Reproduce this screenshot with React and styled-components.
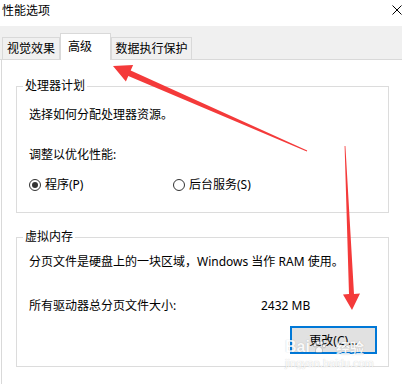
import React from 'react';
import styled, { createGlobalStyle } from 'styled-components';

const GlobalStyle = createGlobalStyle`
  html, body {
    margin: 0;
    padding: 0;
    background: #fff;
  }
  body {
    width: 402px;
    height: 384px;
    overflow: hidden;
    font-family: "Noto Sans", "Noto Sans CJK SC", sans-serif;
    font-size: 12px;
    color: #000;
  }
`;

const Window = styled.div`
  position: relative;
  width: 402px;
  height: 384px;
  background: #fff;
  overflow: hidden;
`;

const TitleBar = styled.div`
  height: 26px;
  display: flex;
  align-items: flex-start;
  justify-content: space-between;
  padding: 3px 0 0 2px;
  box-sizing: border-box;
  line-height: 16px;
`;

const CloseIcon = styled.svg`
  margin-top: 2px;
  width: 10px;
  height: 10px;
`;

const TabStrip = styled.div`
  height: 34px;
  box-sizing: border-box;
  display: flex;
  align-items: flex-end;
  padding-left: 2px;
  background: #f0f0f0;
  border-bottom: 1px solid #d9d9d9;
`;

const Tab = styled.div`
  position: relative;
  box-sizing: border-box;
  display: flex;
  align-items: center;
  width: ${p => p.$w}px;
  height: ${p => (p.$active ? 27 : 22)}px;
  margin-bottom: ${p => (p.$active ? -1 : 0)}px;
  justify-content: ${p => (p.$active ? 'flex-start' : 'center')};
  padding-left: ${p => (p.$active ? 7 : 0)}px;
  padding-bottom: ${p => (p.$active ? 1 : 0)}px;
  background: ${p => (p.$active ? '#fff' : '#f0f0f0')};
  border: 1px solid #d9d9d9;
  border-bottom: none;
  z-index: ${p => (p.$active ? 1 : 0)};
  line-height: 16px;
`;

const Panel = styled.div`
  margin-left: 1px;
  border-left: 1px solid #d9d9d9;
  padding: 18px 13px 0 14px;
  height: 324px;
  box-sizing: border-box;
`;

const Group = styled.fieldset`
  margin: ${p => p.$top || 0}px 0 0 0;
  padding: 0;
  border: 1px solid #dcdcdc;
  min-width: 0;
`;

const Legend = styled.legend`
  margin-left: 6px;
  padding: 0 2px;
  line-height: 16px;
  font-size: 12px;
`;

const GroupBody = styled.div`
  padding: ${p => p.$pad};
`;

const Line = styled.div`
  line-height: 18px;
  margin-top: ${p => p.$gap || 0}px;
  white-space: nowrap;
`;

const RadioRow = styled.div`
  display: grid;
  grid-template-columns: 144px auto;
  margin-top: 12px;
  line-height: 18px;
`;

const Option = styled.label`
  display: flex;
  align-items: center;
  gap: 4px;
`;

const Radio = styled.span`
  position: relative;
  width: 12px;
  height: 12px;
  box-sizing: border-box;
  border: 1px solid #333;
  border-radius: 50%;
  background: #fff;
  &::after {
    content: '';
    display: ${p => (p.$checked ? 'block' : 'none')};
    position: absolute;
    left: 2px;
    top: 2px;
    width: 6px;
    height: 6px;
    border-radius: 50%;
    background: #333;
  }
`;

const SizeRow = styled.div`
  display: flex;
  line-height: 18px;
  margin-top: 26px;
`;

const SizeLabel = styled.span`
  width: 232px;
`;

const ButtonRow = styled.div`
  display: flex;
  justify-content: flex-end;
  margin-top: 11px;
`;

const Button = styled.button`
  width: 87px;
  height: 28px;
  box-sizing: border-box;
  border: 2px solid #0078d7;
  background: #e1e1e1;
  font-family: inherit;
  font-size: 12px;
  color: #000;
  padding: 0;
`;

const Overlay = styled.svg`
  position: absolute;
  left: 0;
  top: 0;
  width: 402px;
  height: 384px;
  pointer-events: none;
`;

const Watermark = styled.div`
  position: absolute;
  left: 285px;
  top: 338px;
  pointer-events: none;
  color: #fff;
  text-shadow: 0 0 1px rgba(0, 0, 0, 0.3);
  opacity: 0.8;
`;

const MarkTop = styled.div`
  display: flex;
  align-items: center;
  gap: 2px;
  font-family: "Liberation Sans", sans-serif;
  font-weight: bold;
  font-size: 16px;
  line-height: 18px;
  span:last-child {
    font-family: "Noto Sans CJK SC", sans-serif;
    font-size: 14px;
    margin-left: 8px;
  }
`;

const MarkUrl = styled.div`
  font-family: "Liberation Sans", sans-serif;
  font-size: 11px;
  line-height: 12px;
  margin-top: 1px;
`;

export default function App() {
  return (
    <Window>
      <GlobalStyle />
      <TitleBar>
        <span>性能选项</span>
        <CloseIcon viewBox="0 0 10 10">
          <path d="M0.5 0.5 L9.5 9.5 M9.5 0.5 L0.5 9.5" stroke="#000" strokeWidth="1" fill="none" />
        </CloseIcon>
      </TitleBar>
      <TabStrip>
        <Tab $w={58}>视觉效果</Tab>
        <Tab $w={51} $active>高级</Tab>
        <Tab $w={81}>数据执行保护</Tab>
      </TabStrip>
      <Panel>
        <Group>
          <Legend>处理器计划</Legend>
          <GroupBody $pad="12px 12px 18px">
            <Line>选择如何分配处理器资源。</Line>
            <Line $gap={22}>调整以优化性能:</Line>
            <RadioRow>
              <Option><Radio $checked />程序(P)</Option>
              <Option><Radio />后台服务(S)</Option>
            </RadioRow>
          </GroupBody>
        </Group>
        <Group $top={16}>
          <Legend>虚拟内存</Legend>
          <GroupBody $pad="8px 11px 12px 12px">
            <Line>分页文件是硬盘上的一块区域，Windows 当作 RAM 使用。</Line>
            <SizeRow>
              <SizeLabel>所有驱动器总分页文件大小:</SizeLabel>
              <span>2432 MB</span>
            </SizeRow>
            <ButtonRow>
              <Button>更改(C)...</Button>
            </ButtonRow>
          </GroupBody>
        </Group>
      </Panel>
      <Watermark>
        <MarkTop>
          <span>Bai</span>
          <svg width="14" height="14" viewBox="0 0 14 14">
            <g fill="#fff" stroke="rgba(0,0,0,0.3)" strokeWidth="0.8">
              <ellipse cx="3" cy="5" rx="1.6" ry="2" />
              <ellipse cx="6" cy="2.6" rx="1.6" ry="2" />
              <ellipse cx="9.6" cy="3" rx="1.6" ry="2" />
              <ellipse cx="12" cy="6" rx="1.5" ry="1.9" />
              <path d="M7 6.5 C4.5 6.5 3 10 3.5 11.5 C4 13 6 12.5 7 12.5 C8 12.5 10 13 10.5 11.5 C11 10 9.5 6.5 7 6.5Z" />
            </g>
          </svg>
          <span>经验</span>
        </MarkTop>
        <MarkUrl>jingyan.baidu.com</MarkUrl>
      </Watermark>
      <Overlay viewBox="0 0 402 384">
        <polygon
          fill="#f43a3a"
          points="113,66 133.1,65 130.7,70.5 307.2,150.6 306.8,151.4 128.3,75.9 125.9,81.4"
        />
        <polygon
          fill="#f43a3a"
          points="352,310 343,294.4 349,294.1 344.6,146 345.4,146 354,293.9 360,293.6"
        />
      </Overlay>
    </Window>
  );
}
